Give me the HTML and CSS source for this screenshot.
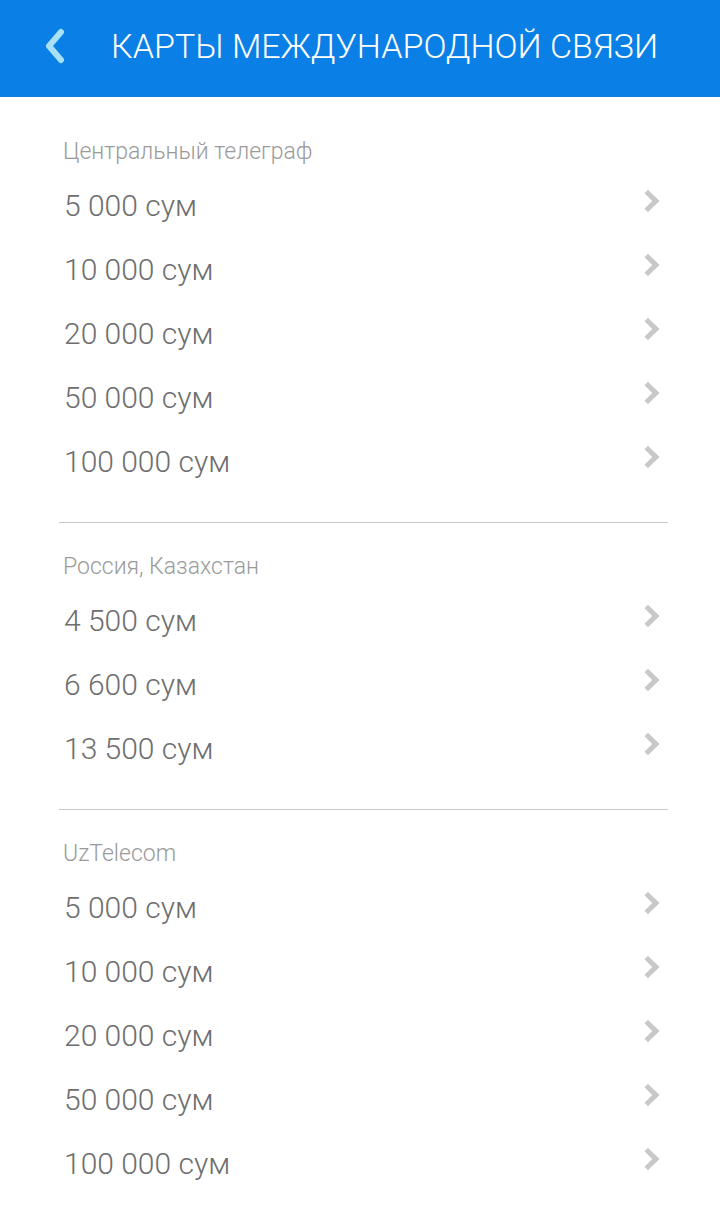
FILE: index.html
```html
<!DOCTYPE html>
<html lang="ru">
<head>
<meta charset="utf-8">
<link rel="stylesheet" href="styles.css">
</head>
<body>
<header class="topbar">
  <button class="back" aria-label="Назад">
    <svg width="26" height="36" viewBox="0 0 26 36"><path d="M19 4 L7 18 L19 32" fill="none" stroke="#a8e0f5" stroke-width="6" stroke-linecap="round" stroke-linejoin="round"/></svg>
  </button>
  <h1 class="title">КАРТЫ МЕЖДУНАРОДНОЙ СВЯЗИ</h1>
</header>
<main class="content">
  <section class="group">
    <h2 class="group-title">Центральный телеграф</h2>
    <ul class="list">
      <li class="row"><span>5 000 сум</span><i class="chev"></i></li>
      <li class="row"><span>10 000 сум</span><i class="chev"></i></li>
      <li class="row"><span>20 000 сум</span><i class="chev"></i></li>
      <li class="row"><span>50 000 сум</span><i class="chev"></i></li>
      <li class="row"><span>100 000 сум</span><i class="chev"></i></li>
    </ul>
  </section>
  <section class="group">
    <h2 class="group-title">Россия, Казахстан</h2>
    <ul class="list">
      <li class="row"><span>4 500 сум</span><i class="chev"></i></li>
      <li class="row"><span>6 600 сум</span><i class="chev"></i></li>
      <li class="row"><span>13 500 сум</span><i class="chev"></i></li>
    </ul>
  </section>
  <section class="group">
    <h2 class="group-title">UzTelecom</h2>
    <ul class="list">
      <li class="row"><span>5 000 сум</span><i class="chev"></i></li>
      <li class="row"><span>10 000 сум</span><i class="chev"></i></li>
      <li class="row"><span>20 000 сум</span><i class="chev"></i></li>
      <li class="row"><span>50 000 сум</span><i class="chev"></i></li>
      <li class="row"><span>100 000 сум</span><i class="chev"></i></li>
    </ul>
  </section>
</main>
</body>
</html>
```
FILE: styles.css
```css
html, body {
  margin: 0;
  padding: 0;
  background: #ffffff;
  font-family: Roboto, "Liberation Sans", sans-serif;
}
.topbar {
  height: 97px;
  background: #0a80e6;
  display: flex;
  align-items: center;
  box-sizing: border-box;
  padding: 0 0 6px 42px;
}
.back {
  border: 0;
  background: none;
  padding: 0;
  width: 26px;
  height: 36px;
  display: flex;
}
.title {
  margin: 0 0 0 43px;
  color: #ffffff;
  font-weight: 300;
  font-size: 34px;
  letter-spacing: 0;
  white-space: nowrap;
}
.content {
  padding: 40px 52px 0 59px;
}
.group {
  border-bottom: 1px solid #c8c8c8;
  padding-bottom: 29px;
  margin-bottom: 29px;
}
.group:last-child {
  border-bottom: 0;
}
.group-title {
  margin: 0 0 6px 4px;
  font-size: 23px;
  font-weight: 300;
  color: #9a9a9a;
  line-height: 30px;
}
.list {
  list-style: none;
  margin: 0;
  padding: 0;
}
.row {
  height: 64px;
  display: flex;
  align-items: center;
  justify-content: space-between;
  padding-left: 5px;
  font-size: 30px;
  font-weight: 300;
  color: #6e6e6e;
}
.chev {
  width: 11px;
  height: 11px;
  border-top: 5px solid #c8c8c8;
  border-right: 5px solid #c8c8c8;
  transform: rotate(45deg);
  margin: -8px 12px 0 0;
}
```
